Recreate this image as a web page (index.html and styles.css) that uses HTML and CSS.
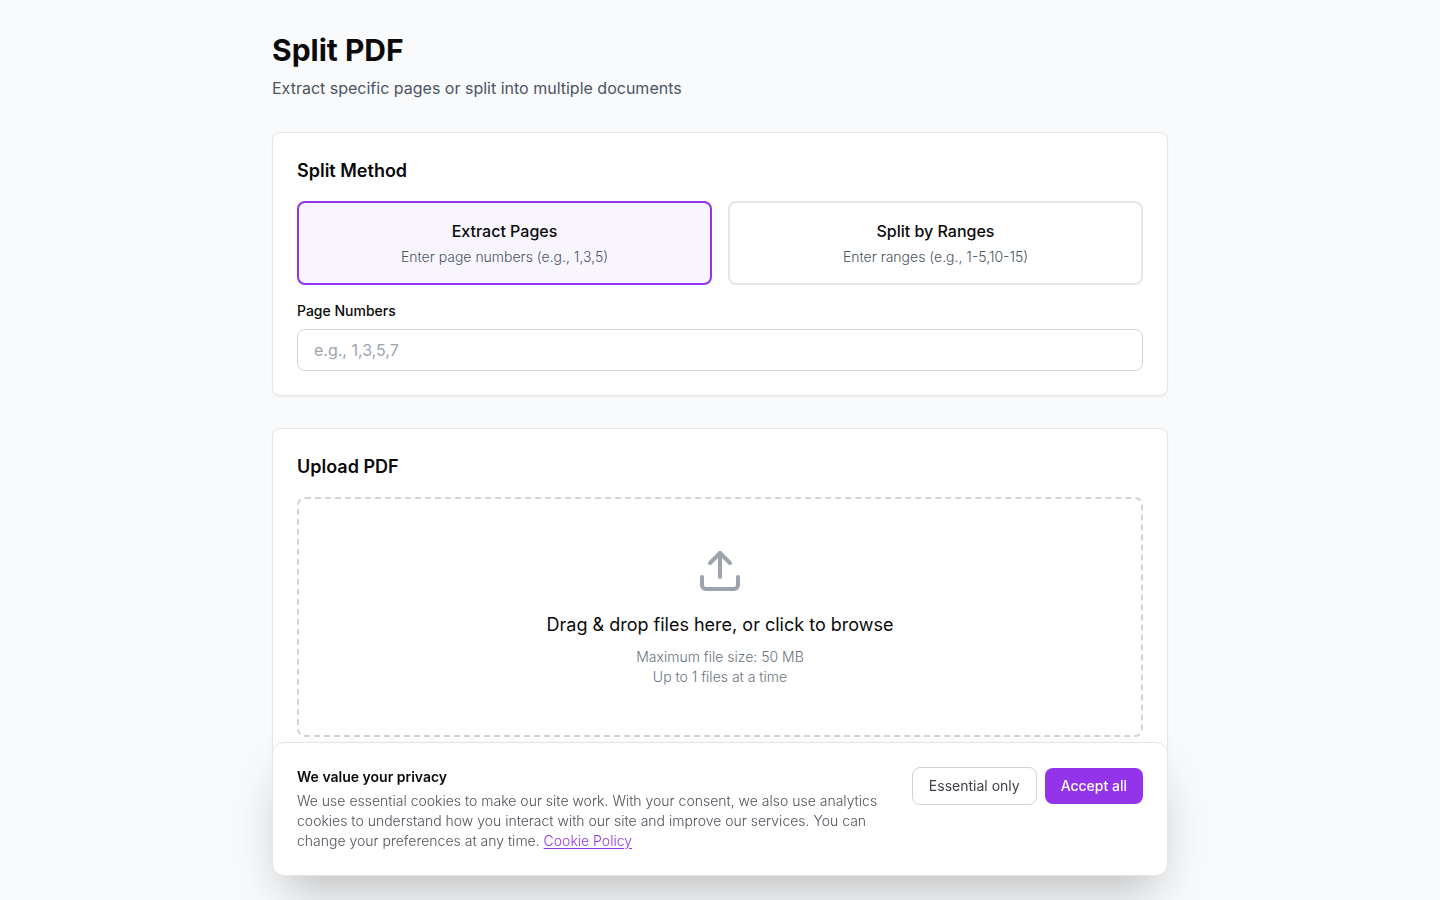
FILE: index.html
```html
<!DOCTYPE html>
<html lang="en">
<head>
    <meta charset="UTF-8">
    <meta name="viewport" content="width=device-width, initial-scale=1.0">
    <title>Split PDF</title>
    <link rel="stylesheet" href="styles.css">
</head>
<body>
    <main class="page">
        <header class="page-header">
            <h1>Split PDF</h1>
            <p>Extract specific pages or split into multiple documents</p>
        </header>

        <section class="card">
            <h2>Split Method</h2>
            <div class="methods">
                <button type="button" class="method active" aria-pressed="true">
                    <span class="method-title">Extract Pages</span>
                    <span class="method-hint">Enter page numbers (e.g., 1,3,5)</span>
                </button>
                <button type="button" class="method" aria-pressed="false">
                    <span class="method-title">Split by Ranges</span>
                    <span class="method-hint">Enter ranges (e.g., 1-5,10-15)</span>
                </button>
            </div>
            <label class="field-label" for="pageNumbers">Page Numbers</label>
            <input class="field" type="text" id="pageNumbers" placeholder="e.g., 1,3,5,7">
        </section>

        <section class="card">
            <h2>Upload PDF</h2>
            <button type="button" class="dropzone">
                <svg class="upload-icon" viewBox="0 0 24 24" fill="none" stroke="currentColor" stroke-width="2" stroke-linecap="round" stroke-linejoin="round" aria-hidden="true">
                    <path d="M21 15v4a2 2 0 0 1-2 2H5a2 2 0 0 1-2-2v-4"/>
                    <path d="M17 8l-5-5-5 5"/>
                    <path d="M12 3v12"/>
                </svg>
                <span class="dropzone-title">Drag &amp; drop files here, or click to browse</span>
                <span class="dropzone-hint">Maximum file size: 50 MB</span>
                <span class="dropzone-hint">Up to 1 files at a time</span>
            </button>
        </section>
    </main>

    <!-- Cookie consent -->
    <div class="consent" role="dialog" aria-labelledby="consentTitle">
        <div class="consent-text">
            <h2 id="consentTitle">We value your privacy</h2>
            <p>We use essential cookies to make our site work. With your consent, we also use analytics cookies to understand how you interact with our site and improve our services. You can change your preferences at any time. <a href="#">Cookie Policy</a></p>
        </div>
        <div class="consent-actions">
            <button type="button" class="btn btn-outline">Essential only</button>
            <button type="button" class="btn btn-primary">Accept all</button>
        </div>
    </div>
</body>
</html>
```
FILE: styles.css
```css
* {
    box-sizing: border-box;
}

body {
    margin: 0;
    min-height: 100vh;
    background-color: #f9fafb;
    color: #0a0a0a;
    font-family: Inter, "Open Sans", sans-serif;
    font-size: 16px;
    line-height: 24px;
}

h1, h2, p {
    margin: 0;
}

button, input {
    font: inherit;
    color: inherit;
}

button {
    cursor: pointer;
}

.page {
    max-width: 944px;
    margin: 0 auto;
    padding: 32px 24px;
}

.page-header {
    margin-bottom: 32px;
}

h1 {
    margin-bottom: 8px;
    font-size: 30px;
    font-weight: 700;
    line-height: 36px;
}

.page-header p {
    color: #4b5563;
}

.card {
    margin-bottom: 32px;
    padding: 24px;
    background-color: #fff;
    border: 1px solid #e5e5e5;
    border-radius: 8px;
    box-shadow: 0 1px 2px rgba(0, 0, 0, 0.05);
}

.card h2 {
    margin-bottom: 16px;
    font-size: 18px;
    font-weight: 600;
    line-height: 28px;
}

.methods {
    display: grid;
    grid-template-columns: 1fr 1fr;
    gap: 16px;
    margin-bottom: 16px;
}

.method {
    padding: 16px;
    background-color: #fff;
    border: 2px solid #e5e7eb;
    border-radius: 8px;
}

.method.active {
    background-color: #f8f5ff;
    border-color: #9333ea;
}

.method-title {
    display: block;
    margin-bottom: 4px;
    font-weight: 500;
}

.method-hint {
    display: block;
    color: #4b5563;
    font-size: 14px;
    font-weight: 300;
    line-height: 20px;
}

.field-label {
    display: block;
    margin-bottom: 8px;
    font-size: 14px;
    font-weight: 500;
    line-height: 20px;
}

.field {
    display: block;
    width: 100%;
    padding: 8px 16px;
    background-color: #fff;
    border: 1px solid #d1d5db;
    border-radius: 8px;
}

.field::placeholder {
    color: #9ca3af;
}

.dropzone {
    display: flex;
    flex-direction: column;
    align-items: center;
    width: 100%;
    padding: 48px;
    background-color: #fff;
    border: 2px dashed #d1d5db;
    border-radius: 8px;
}

.upload-icon {
    width: 48px;
    height: 48px;
    margin-bottom: 16px;
    color: #9ca3af;
}

.dropzone-title {
    margin-bottom: 8px;
    font-size: 18px;
    line-height: 28px;
}

.dropzone-hint {
    color: #6b7280;
    font-size: 14px;
    font-weight: 300;
    line-height: 20px;
}

.consent {
    position: fixed;
    right: 24px;
    bottom: 24px;
    left: 24px;
    display: flex;
    align-items: flex-start;
    justify-content: space-between;
    gap: 16px;
    max-width: 896px;
    margin: 0 auto;
    padding: 24px;
    background-color: #fff;
    border: 1px solid #e5e5e5;
    border-radius: 12px;
    box-shadow: 0 25px 50px -12px rgba(0, 0, 0, 0.25);
    font-size: 14px;
    line-height: 20px;
}

.consent h2 {
    margin-bottom: 4px;
    font-size: 14px;
    font-weight: 600;
    line-height: 20px;
}

.consent p {
    color: #52525b;
    font-weight: 300;
}

.consent a {
    color: #9333ea;
    text-underline-offset: 2px;
}

.consent-actions {
    display: flex;
    align-items: center;
    flex-shrink: 0;
    gap: 8px;
}

.btn {
    padding: 8px 16px;
    border: none;
    border-radius: 8px;
    white-space: nowrap;
}

.btn-outline {
    background-color: #fff;
    border: 1px solid #d4d4d8;
    color: #3f3f46;
}

.btn-primary {
    background-color: #9333ea;
    color: #fff;
    font-weight: 500;
}
```
